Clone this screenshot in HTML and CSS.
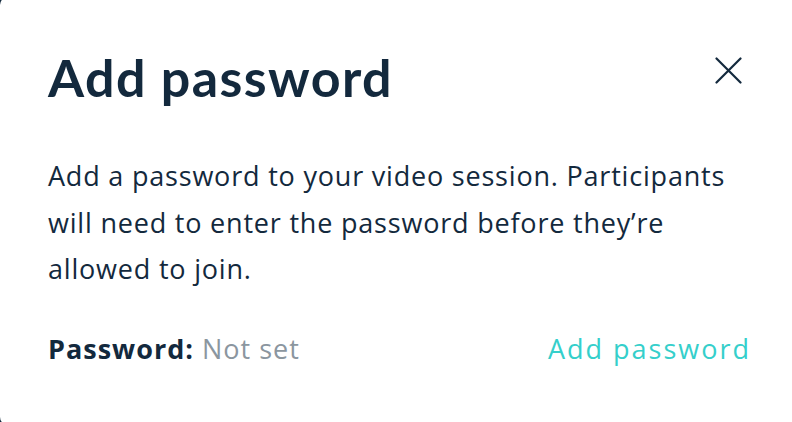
FILE: index.html
```html
<!DOCTYPE html>
<html>
<head>
    <link rel="stylesheet" href="styles.css">
</head>
<body>
    <div class="modal">
        <div class="modal-header">
            <h1>Add password</h1>
            <button class="close-btn" aria-label="Close">
                <svg width="27" height="27" viewBox="0 0 27 27">
                    <path d="M1.5 1.5 L25.5 25.5 M25.5 1.5 L1.5 25.5" stroke="#13293d" stroke-width="2.2" stroke-linecap="round" fill="none"/>
                </svg>
            </button>
        </div>
        <p class="description">Add a password to your video session. Participants will need to enter the password before they’re allowed to join.</p>
        <div class="password-row">
            <div class="password-status"><span class="label">Password:</span> <span class="value">Not set</span></div>
            <a class="add-link" href="#">Add password</a>
        </div>
    </div>
</body>
</html>
```

FILE: styles.css
```css
html, body {
    height: 422px;
    overflow: hidden;
}
body {
    margin: 0;
    background: #13293d;
    font-family: "Open Sans", sans-serif;
    color: #13293d;
}
.modal {
    box-sizing: border-box;
    background: #fff;
    border-radius: 8px;
    margin: -3px -20px 0 0;
    padding: 50px 61px 0 48px;
    height: 428px;
}
.modal-header {
    display: flex;
    justify-content: space-between;
    align-items: flex-start;
}
h1 {
    margin: 0;
    font-family: Lato, sans-serif;
    font-size: 52px;
    font-weight: 700;
    line-height: 60px;
    letter-spacing: 1.4px;
}
.close-btn {
    background: none;
    border: none;
    padding: 0;
    margin: 10px 9px 0 0;
    line-height: 0;
    cursor: pointer;
}
.description {
    margin: 46.3px 0 0;
    font-size: 27px;
    line-height: 46.5px;
    letter-spacing: 0.8px;
    max-width: 700px;
}
.password-row {
    display: flex;
    justify-content: space-between;
    margin-top: 33.5px;
    font-size: 27px;
    line-height: 46.5px;
    letter-spacing: 1px;
}
.label {
    font-weight: 700;
}
.value {
    color: #8b969f;
}
.add-link {
    color: #35cfcb;
    letter-spacing: 2px;
    text-decoration: none;
}
```
